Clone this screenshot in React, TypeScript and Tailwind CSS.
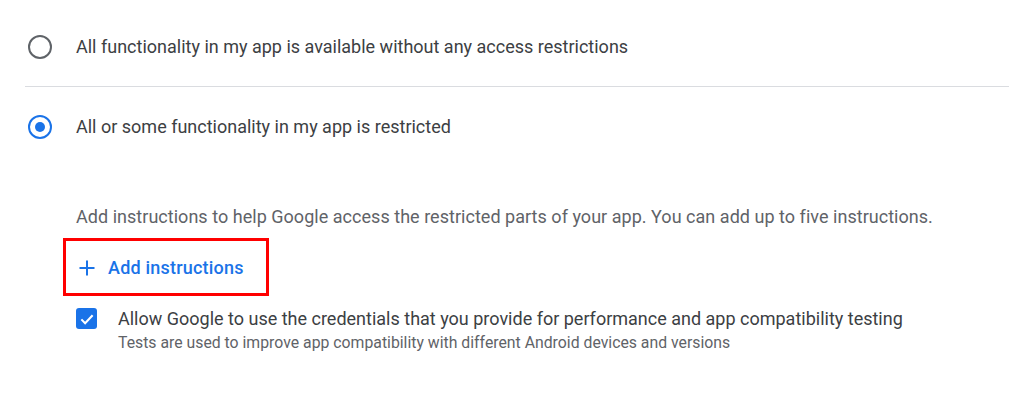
function Radio({ checked }: { checked: boolean }) {
  return (
    <span
      className={`flex h-[24px] w-[24px] shrink-0 items-center justify-center rounded-full border-2 ${
        checked ? 'border-[#1a73e8]' : 'border-[#5f6368]'
      }`}
    >
      {checked && <span className="h-[10px] w-[10px] rounded-full bg-[#1a73e8]" />}
    </span>
  );
}

export default function App() {
  return (
    <div className="h-[401px] w-[1009px] bg-white pt-[8px] font-['Roboto',sans-serif] text-[18px] text-[#3c4043]">
      {/* Option 1 */}
      <div className="ml-[25px] flex h-[79px] items-center border-b border-[#dadce0]">
        <div className="flex w-[51px] justify-start pl-[3px]">
          <Radio checked={false} />
        </div>
        <span className="leading-6">All functionality in my app is available without any access restrictions</span>
      </div>

      {/* Option 2 */}
      <div className="ml-[25px] flex h-[79px] items-center">
        <div className="flex w-[51px] justify-start pl-[3px]">
          <Radio checked />
        </div>
        <span className="leading-6">All or some functionality in my app is restricted</span>
      </div>

      <div className="pl-[76px] pt-[39px]">
        <p className="leading-6 tracking-[0.03px] text-[#5f6368]">
          Add instructions to help Google access the restricted parts of your app. You can add up to five instructions.
        </p>

        <div className="-ml-[13px] mt-[9px] flex h-[58px] w-[206px] items-center border-[3px] border-[#ff0000] pl-[13px] pt-[2px]">
          <button className="flex items-center gap-[13px] font-medium tracking-[0.2px] text-[#1a73e8]">
            <svg viewBox="0 0 16 16" className="h-[16px] w-[16px]" fill="none" stroke="currentColor" strokeWidth={2}>
              <path d="M8 0.5v15M0.5 8h15" />
            </svg>
            <span className="leading-6">Add instructions</span>
          </button>
        </div>

        <div className="mt-[11px] flex items-start gap-[21px]">
          <span className="mt-[1px] flex h-[21px] w-[21px] shrink-0 items-center justify-center rounded-[3px] bg-[#1a73e8]">
            <svg viewBox="0 0 24 24" className="h-[18px] w-[18px]" fill="none" stroke="white" strokeWidth={2.8}>
              <path d="M4.5 12.5l5 5 10-10.5" />
            </svg>
          </span>
          <div>
            <div className="leading-6">
              Allow Google to use the credentials that you provide for performance and app compatibility testing
            </div>
            <div className="text-[15.8px] leading-[24px] text-[#5f6368]">
              Tests are used to improve app compatibility with different Android devices and versions
            </div>
          </div>
        </div>
      </div>
    </div>
  );
}
